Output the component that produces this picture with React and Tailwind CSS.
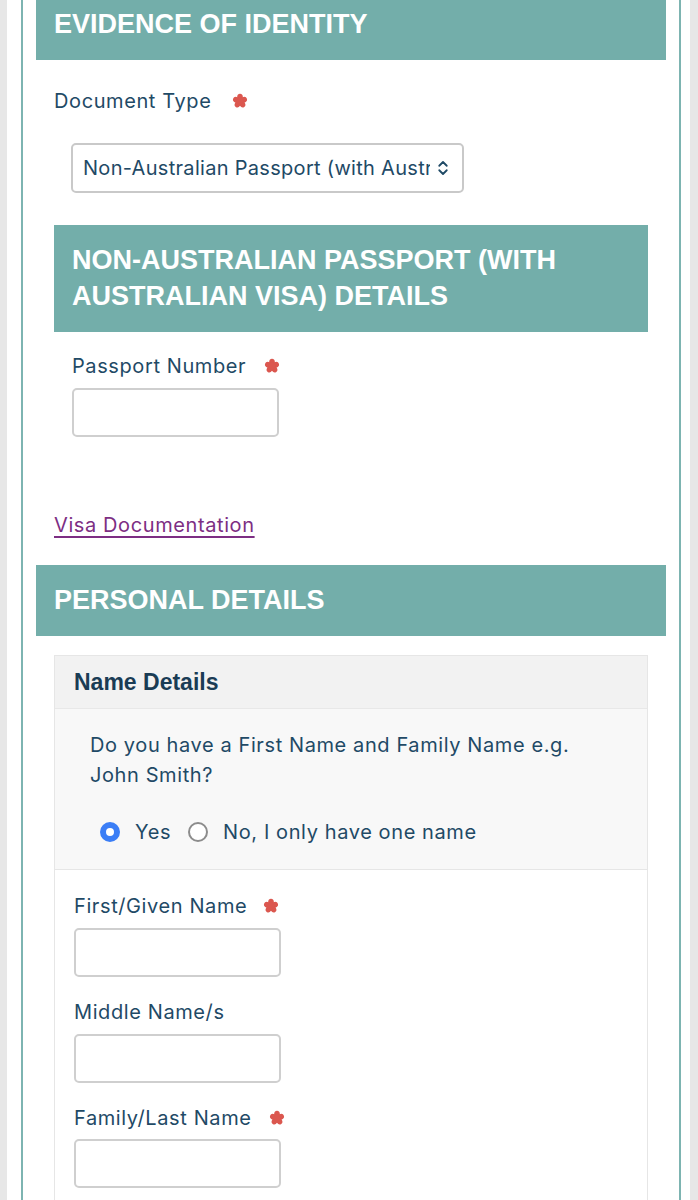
import { ChevronsUpDown } from "lucide-react"

const font = { fontFamily: "Inter, 'Noto Sans', sans-serif" }
const head = { fontFamily: "'Liberation Sans', Arial, sans-serif" }

function Star({ className = "" }) {
  return (
    <svg viewBox="0 0 20 20" className={"inline-block w-[16px] h-[16px] " + className}>
      <g fill="#d8453c" opacity="0.9">
        {[0, 72, 144, 216, 288].map((r) => (
          <ellipse key={r} cx="10" cy="5.5" rx="3.6" ry="4.6" transform={`rotate(${r} 10 10)`} />
        ))}
        <circle cx="10" cy="10" r="4" />
      </g>
    </svg>
  )
}

function Label({ children, required, starGap = "ml-4" }) {
  return (
    <div className="flex items-center h-[28px] text-[20px] tracking-[0.6px] text-[#1f4a66]">
      <span>{children}</span>
      {required && <Star className={starGap} />}
    </div>
  )
}

function TextBox() {
  return <div className="w-[207px] h-[49px] rounded-[5px] border-2 border-[#cfcfcf] bg-white" />
}

function Banner({ children, className = "" }) {
  return (
    <div
      style={head}
      className={"bg-[#73aeaa] text-white font-bold text-[27px] leading-[36px] pl-[18px] pr-4 " + className}
    >
      {children}
    </div>
  )
}

export default function App() {
  return (
    <div className="min-h-screen bg-[#e7e7e7] flex" style={font}>
      <div className="ml-[7px] w-[683px] bg-white pl-[14px] pr-[9px]">
        <div className="border-x-2 border-[#7db4b1] px-[13px] min-h-[1200px]">
          <Banner className="h-[60px] pt-[6px]">EVIDENCE OF IDENTITY</Banner>

          <div className="px-[18px]">
            <div className="mt-[27px]">
              <Label required starGap="ml-[21px]">Document Type</Label>
            </div>
            <div className="mt-[28px] ml-[17px] w-[393px] h-[50px] rounded-[5px] border-2 border-[#c9c9c9] flex items-center pl-[10px] pr-[10px] text-[20px] tracking-[0.3px] text-[#1f4a66]">
              <span className="flex-1 overflow-hidden whitespace-nowrap">
                Non-Australian Passport (with Australian Visa)
              </span>
              <ChevronsUpDown className="w-[18px] h-[18px] ml-1 text-[#1f4a66]" strokeWidth={2.4} />
            </div>

            <Banner className="mt-[32px] pt-[17px] pb-[18px]">
              NON-AUSTRALIAN PASSPORT (WITH
              <br />
              AUSTRALIAN VISA) DETAILS
            </Banner>

            <div className="px-[18px]">
              <div className="mt-[20px]">
                <Label required starGap="ml-[18px]">Passport Number</Label>
              </div>
              <div className="mt-[8px]">
                <TextBox />
              </div>
            </div>
          </div>

          <div className="px-[18px] mt-[74px]">
            <a href="#" className="block h-[28px] leading-[28px] text-[20px] text-[#7d2e83] underline underline-offset-[4px] decoration-[1.5px] tracking-[0.6px]">
              Visa Documentation
            </a>
          </div>

          <Banner className="mt-[26px] pt-[17px] pb-[18px]">PERSONAL DETAILS</Banner>

          <div className="mx-[18px] mt-[19px] border border-[#e6e6e6]">
            <div
              style={head}
              className="bg-[#f2f2f2] h-[53px] flex items-center pl-[19px] text-[23px] font-bold text-[#1a3c55] border-b border-[#e8e8e8]"
            >
              Name Details
            </div>
            <div className="bg-[#f8f8f8] border-b border-[#e6e6e6] pl-[35px] pt-[21px] pb-[23px] text-[20px] text-[#1f4a66] tracking-[0.6px]">
              <p className="leading-[30px]">
                Do you have a First Name and Family Name e.g.
                <br />
                John Smith?
              </p>
              <div className="mt-[28px] h-[28px] flex items-center ml-[10px]">
                <span className="w-[20px] h-[20px] rounded-full border-[6px] border-[#3b7ef6] bg-white" />
                <span className="ml-[15px]">Yes</span>
                <span className="ml-[17px] w-[20px] h-[20px] rounded-full border-2 border-[#8c8c8c] bg-white" />
                <span className="ml-[15px]">No, I only have one name</span>
              </div>
            </div>
            <div className="bg-white pl-[19px] pt-[22px] pb-[40px]">
              <Label required starGap="ml-[16px]">First/Given Name</Label>
              <div className="mt-[8px]">
                <TextBox />
              </div>
              <div className="mt-[21px]">
                <Label>Middle Name/s</Label>
              </div>
              <div className="mt-[8px]">
                <TextBox />
              </div>
              <div className="mt-[21px]">
                <Label required starGap="ml-[17px]">Family/Last Name</Label>
              </div>
              <div className="mt-[7px]">
                <TextBox />
              </div>
            </div>
          </div>
        </div>
      </div>
    </div>
  )
}
